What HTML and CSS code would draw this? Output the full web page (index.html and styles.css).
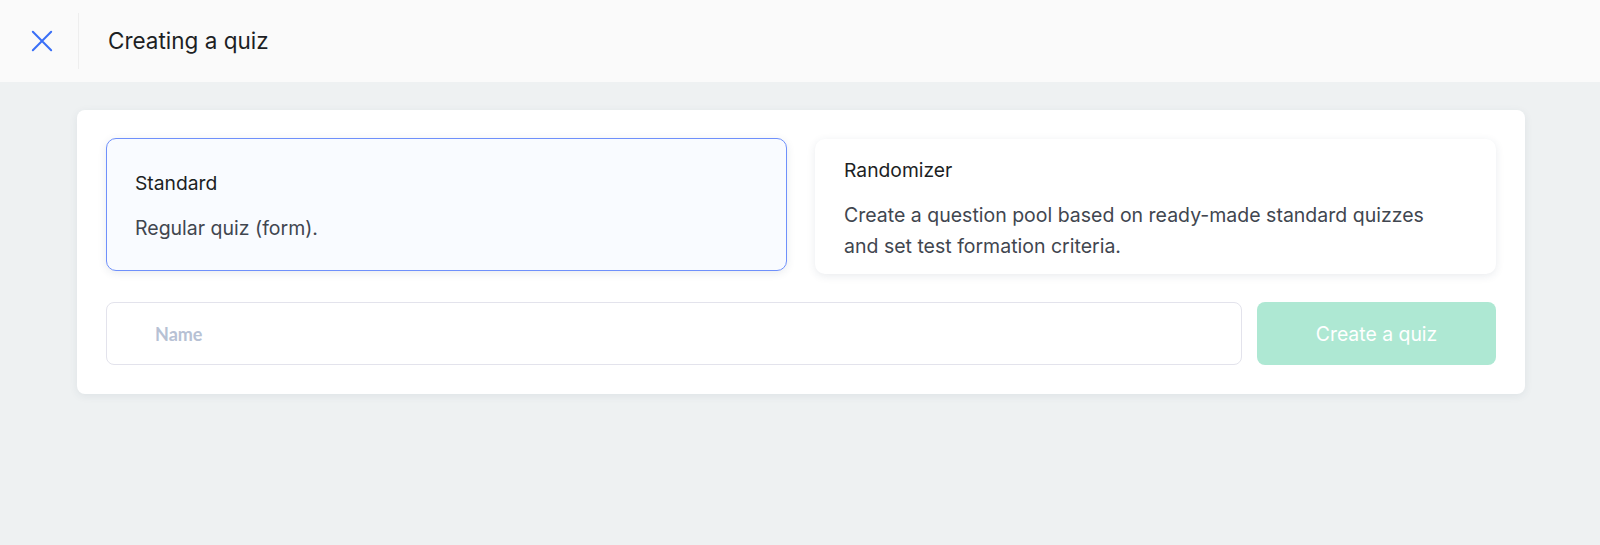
FILE: index.html
```html
<!DOCTYPE html>
<html lang="en">
<head>
    <meta charset="UTF-8">
    <meta name="viewport" content="width=device-width, initial-scale=1.0">
    <title>Creating a quiz</title>
    <link rel="stylesheet" href="styles.css">
</head>
<body>

    <header class="topbar">
        <button class="close-btn" aria-label="close">
            <svg width="24" height="24" viewBox="0 0 24 24" fill="none">
                <path d="M2 2 L22 22 M22 2 L2 22" stroke="#3a6ff7" stroke-width="2.2" stroke-linecap="round"/>
            </svg>
        </button>
        <div class="topbar-title">Creating a quiz</div>
    </header>

    <main class="content">
        <div class="panel">
            <div class="types">
                <div class="type-card selected">
                    <div class="type-name">Standard</div>
                    <div class="type-desc">Regular quiz (form).</div>
                </div>
                <div class="type-card">
                    <div class="type-name">Randomizer</div>
                    <div class="type-desc">Create a question pool based on ready-made standard quizzes<br>and set test formation criteria.</div>
                </div>
            </div>
            <div class="create-row">
                <input class="name-input" type="text" placeholder="Name">
                <button class="create-btn" disabled>Create a quiz</button>
            </div>
        </div>
    </main>

</body>
</html>
```

FILE: styles.css
```css
:root
{
    --blue: #3a6ff7;
    --text: #1d1f24;
    --muted: #41464f;
    --page-bg: #eef1f2;
}

*
{
    box-sizing: border-box;
    margin: 0;
    padding: 0;
}

body
{
    min-height: 100vh;
    background-color: var(--page-bg);
    font-family: "Inter", "Liberation Sans", sans-serif;
    color: var(--text);
}

.topbar
{
    display: flex;
    align-items: center;
    height: 82px;
    background-color: #fafafa;
}

.close-btn
{
    display: flex;
    align-items: center;
    justify-content: center;
    width: 79px;
    height: 56px;
    border: none;
    border-right: 1px solid #eeeeee;
    background: none;
    padding-left: 12px;
    padding-right: 6px;
    cursor: pointer;
}

.close-btn svg
{
    width: 22px;
    height: 22px;
}

.topbar-title
{
    padding-left: 29px;
    padding-bottom: 1px;
    font-size: 22.5px;
    color: var(--text);
}

.content
{
    padding: 28px 75px 0 77px;
}

.panel
{
    display: flex;
    flex-direction: column;
    gap: 28px;
    padding: 29px;
    border-radius: 8px;
    background-color: #ffffff;
    box-shadow: 0 2px 8px rgba(40, 60, 90, 0.08);
}

.types
{
    display: flex;
    gap: 28px;
}

.type-card
{
    flex: 1;
    display: flex;
    flex-direction: column;
    justify-content: center;
    gap: 18px;
    height: 135px;
    padding: 6px 28px 0;
    border: 1px solid transparent;
    border-radius: 10px;
    background-color: #ffffff;
    box-shadow: 0 2px 8px rgba(40, 60, 90, 0.1);
}

.type-card.selected
{
    border-color: #6f90fb;
    background-color: #f9fbff;
    height: 133px;
    margin-top: -1px;
}

.type-name
{
    font-size: 19.3px;
    color: var(--text);
}

.type-desc
{
    font-size: 19.5px;
    line-height: 31px;
    color: var(--muted);
}

.create-row
{
    display: flex;
    gap: 15px;
}

.name-input
{
    flex: 1;
    height: 63px;
    padding-left: 48px;
    border: 1px solid #e3e3ec;
    border-radius: 8px;
    font-family: "Lato", sans-serif;
    font-size: 18px;
    font-weight: bold;
    color: var(--text);
    outline: none;
}

.name-input::placeholder
{
    color: #b7c1d4;
}

.create-btn
{
    width: 239px;
    height: 63px;
    border: none;
    border-radius: 8px;
    background-color: #aee8d3;
    font-family: "Inter", "Liberation Sans", sans-serif;
    font-size: 19.4px;
    color: #ffffff;
}
```
